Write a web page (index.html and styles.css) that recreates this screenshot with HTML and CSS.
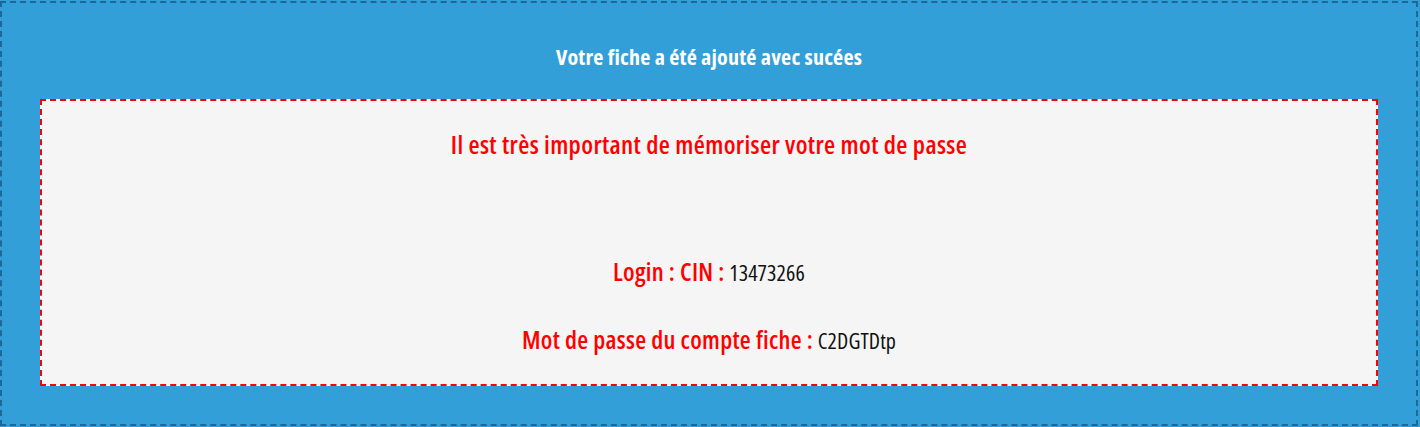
FILE: index.html
```html
<!DOCTYPE html>
<html lang="fr">
<head>
<meta charset="utf-8">
<title>Fiche ajoutée</title>
<link rel="stylesheet" href="styles.css">
</head>
<body>
<div class="panel">
  <h2 class="panel-title">Votre fiche a été ajouté avec sucées</h2>
  <div class="notice">
    <p class="notice-warning">Il est très important de mémoriser votre mot de passe</p>
    <p class="cred"><span class="cred-label">Login : CIN :</span> <span class="cred-value">13473266</span></p>
    <p class="cred"><span class="cred-label">Mot de passe du compte fiche :</span> <span class="cred-value">C2DGTDtp</span></p>
  </div>
</div>
</body>
</html>
```
FILE: styles.css
```css
html, body {
  margin: 0;
  padding: 0;
  background: #339fd9;
}
body {
  padding-top: 1px;
  font-family: "Open Sans", sans-serif;
  font-stretch: 75%;
}
.panel {
  width: 1418px;
  height: 425px;
  box-sizing: border-box;
  border: 2px dashed #1d6896;
  background: #339fd9;
  padding: 0 38px;
}
.panel-title {
  margin: 0;
  height: 96px;
  padding-top: 41px;
  box-sizing: border-box;
  text-align: center;
  color: #fff;
  font-size: 22px;
  font-weight: bold;
  letter-spacing: 0.2px;
  line-height: 24px;
}
.notice {
  border: 2px dashed #ff0000;
  background: #f5f5f5;
  height: 287px;
  box-sizing: border-box;
  text-align: center;
  padding-top: 29px;
}
.notice-warning {
  margin: 0 0 99px;
  color: #ff0000;
  font-size: 25.5px;
  font-weight: 600;
  letter-spacing: 0.35px;
  line-height: 28px;
}
.cred {
  margin: 0 0 39px;
  font-size: 25px;
  line-height: 28px;
}
.cred-label {
  color: #ff0000;
  font-weight: 600;
  letter-spacing: 0.3px;
}
.cred-value {
  color: #111;
  font-size: 22px;
  letter-spacing: 0.1px;
}
```
